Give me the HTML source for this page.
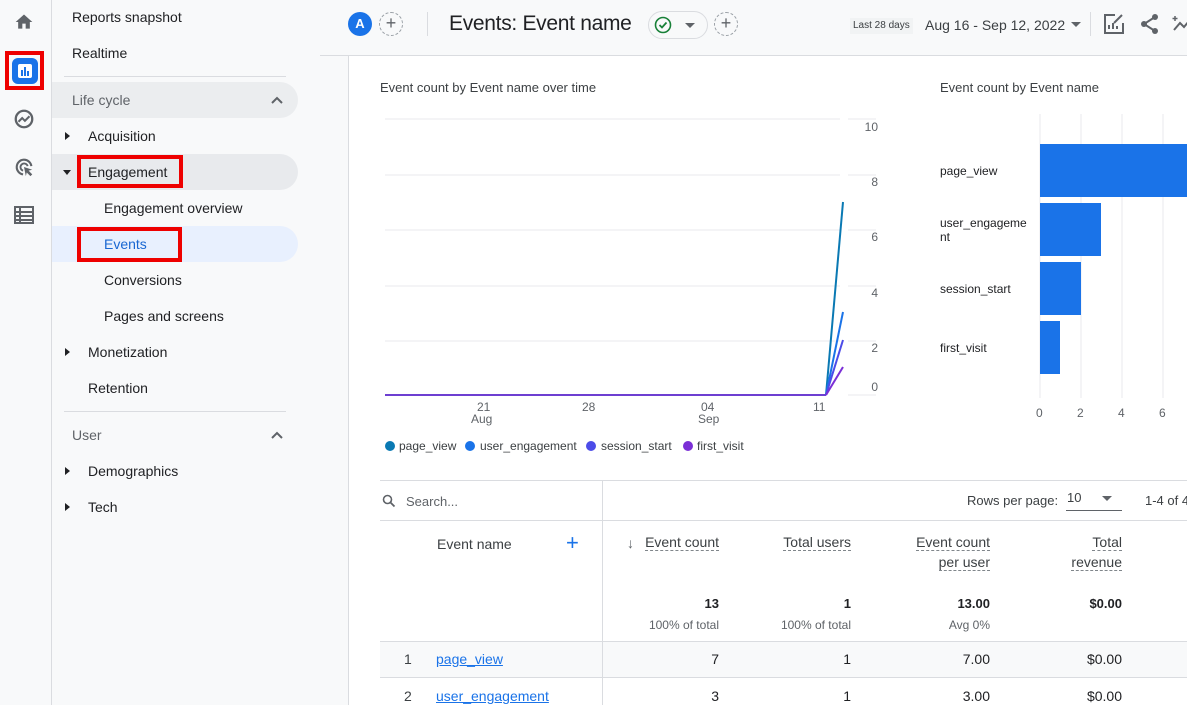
<!DOCTYPE html>
<html><head><style>
*{margin:0;padding:0;box-sizing:border-box}
body{width:1187px;height:705px;overflow:hidden;background:#f8f9fa;font-family:"Liberation Sans",sans-serif;color:#202124;position:relative}
.a{position:absolute;white-space:nowrap}
.nav{font-size:14px;color:#202124}
.red{position:absolute;border:4px solid #e00;}
.r{text-align:right}
.dash{border-bottom:1px dashed #80868b}
</style></head><body>
<div class="a" style="left:0;top:0;width:52px;height:705px;background:#f8f9fa;border-right:1px solid #dadce0"></div>
<svg class="a" style="left:14px;top:12px" width="20" height="20" viewBox="0 0 24 24"><path d="M10 20v-6h4v6h5v-8h3L12 3 2 12h3v8z" fill="#5f6368"/></svg>
<div class="a" style="left:12px;top:58px;width:26px;height:26px;background:#1a73e8;border-radius:6px"></div>
<div class="a" style="left:18px;top:64px;width:14px;height:14px;background:#fff;border-radius:2px"></div>
<div class="a" style="left:21px;top:70px;width:2px;height:6px;background:#1a73e8"></div>
<div class="a" style="left:24px;top:67px;width:2px;height:9px;background:#1a73e8"></div>
<div class="a" style="left:27px;top:71px;width:2px;height:5px;background:#1a73e8"></div>
<div class="red" style="left:5px;top:51px;width:39px;height:39px"></div>
<svg class="a" style="left:13px;top:108px" width="22" height="22" viewBox="0 0 24 24"><circle cx="12" cy="12" r="9" fill="none" stroke="#5f6368" stroke-width="2.5"/><path d="M6 15l4-4 3 3 5-5" fill="none" stroke="#5f6368" stroke-width="2.2"/></svg>
<svg class="a" style="left:13px;top:156px" width="22" height="22" viewBox="0 0 24 24"><path d="M11 20a8 8 0 1 1 9-9" fill="none" stroke="#5f6368" stroke-width="2.3"/><path d="M11 16a4 4 0 1 1 5-5" fill="none" stroke="#5f6368" stroke-width="2"/><path d="M12 12l9 3-4 1 4 4-2 2-4-4-1 4z" fill="#5f6368"/></svg>
<svg class="a" style="left:14px;top:206px" width="20" height="18" viewBox="0 0 20 18"><rect x="1" y="1" width="18" height="16" fill="none" stroke="#5f6368" stroke-width="2"/><path d="M1 6h18M1 10h18M1 14h18M6 1v16" stroke="#5f6368" stroke-width="2"/></svg>

<div class="a nav" style="left:72px;top:9px">Reports snapshot</div>
<div class="a nav" style="left:72px;top:45px">Realtime</div>
<div class="a" style="left:64px;top:76px;width:222px;height:1px;background:#dadce0"></div>
<div class="a" style="left:52px;top:82px;width:246px;height:36px;background:#ebedef;border-radius:0 18px 18px 0"></div>
<div class="a nav" style="left:72px;top:92px;color:#5f6368">Life cycle</div>
<svg class="a" style="left:270px;top:95px" width="14" height="10" viewBox="0 0 14 10"><path d="M2 8l5-5 5 5" fill="none" stroke="#5f6368" stroke-width="2"/></svg>
<div class="a" style="left:65px;top:132px;border-left:5px solid #202124;border-top:4px solid transparent;border-bottom:4px solid transparent"></div>
<div class="a nav" style="left:88px;top:128px">Acquisition</div>
<div class="a" style="left:52px;top:154px;width:246px;height:36px;background:#e8eaed;border-radius:0 18px 18px 0"></div>
<div class="a" style="left:63px;top:170px;border-top:5px solid #202124;border-left:4px solid transparent;border-right:4px solid transparent"></div>
<div class="a nav" style="left:88px;top:164px">Engagement</div>
<div class="red" style="left:77px;top:155px;width:106px;height:33px"></div>
<div class="a nav" style="left:104px;top:200px">Engagement overview</div>
<div class="a" style="left:52px;top:226px;width:246px;height:36px;background:#e8f0fe;border-radius:0 18px 18px 0"></div>
<div class="a nav" style="left:104px;top:236px;color:#1967d2">Events</div>
<div class="red" style="left:77px;top:227px;width:105px;height:35px"></div>
<div class="a nav" style="left:104px;top:272px">Conversions</div>
<div class="a nav" style="left:104px;top:308px">Pages and screens</div>
<div class="a" style="left:65px;top:348px;border-left:5px solid #202124;border-top:4px solid transparent;border-bottom:4px solid transparent"></div>
<div class="a nav" style="left:88px;top:344px">Monetization</div>
<div class="a nav" style="left:88px;top:380px">Retention</div>
<div class="a" style="left:64px;top:411px;width:222px;height:1px;background:#dadce0"></div>
<div class="a nav" style="left:72px;top:427px;color:#5f6368">User</div>
<svg class="a" style="left:270px;top:430px" width="14" height="10" viewBox="0 0 14 10"><path d="M2 8l5-5 5 5" fill="none" stroke="#5f6368" stroke-width="2"/></svg>
<div class="a" style="left:65px;top:467px;border-left:5px solid #202124;border-top:4px solid transparent;border-bottom:4px solid transparent"></div>
<div class="a nav" style="left:88px;top:463px">Demographics</div>
<div class="a" style="left:65px;top:503px;border-left:5px solid #202124;border-top:4px solid transparent;border-bottom:4px solid transparent"></div>
<div class="a nav" style="left:88px;top:499px">Tech</div>
<div class="a" style="left:348px;top:56px;width:1px;height:649px;background:#dadce0"></div>

<div class="a" style="left:320px;top:55px;width:867px;height:1px;background:#dadce0"></div>
<div class="a" style="left:348px;top:12px;width:24px;height:24px;border-radius:50%;background:#1a73e8;color:#fff;font-size:13px;font-weight:bold;text-align:center;line-height:24px">A</div>
<div class="a" style="left:379px;top:12px;width:24px;height:24px;border-radius:50%;border:1px dashed #9aa0a6;color:#5f6368;text-align:center;line-height:21px;font-size:18px">+</div>
<div class="a" style="left:427px;top:12px;width:1px;height:24px;background:#dadce0"></div>
<div class="a" style="left:449px;top:12px;font-size:21px;letter-spacing:-0.3px;color:#202124">Events: Event name</div>
<div class="a" style="left:648px;top:11px;width:60px;height:28px;border:1px solid #dadce0;border-radius:14px"></div>
<svg class="a" style="left:654px;top:16px" width="18" height="18" viewBox="0 0 18 18"><circle cx="9" cy="9" r="7.5" fill="none" stroke="#188038" stroke-width="1.6"/><path d="M5.5 9l2.5 2.5 4.5-5" fill="none" stroke="#188038" stroke-width="1.8"/></svg>
<div class="a" style="left:685px;top:23px;border-top:5px solid #5f6368;border-left:5px solid transparent;border-right:5px solid transparent"></div>
<div class="a" style="left:714px;top:12px;width:24px;height:24px;border-radius:50%;border:1px dashed #9aa0a6;color:#5f6368;text-align:center;line-height:21px;font-size:18px">+</div>
<div class="a" style="left:850px;top:18px;height:16px;padding:0 3px;background:#f1f3f4;font-size:10px;line-height:16px;color:#3c4043">Last 28 days</div>
<div class="a" style="left:925px;top:17px;font-size:14px;color:#3c4043">Aug 16 - Sep 12, 2022</div>
<div class="a" style="left:1071px;top:22px;border-top:5px solid #5f6368;border-left:5px solid transparent;border-right:5px solid transparent"></div>
<div class="a" style="left:1090px;top:12px;width:1px;height:24px;background:#dadce0"></div>
<svg class="a" style="left:1103px;top:13px" width="22" height="22" viewBox="0 0 22 22"><path d="M12 2H2v18h18V10" fill="none" stroke="#5f6368" stroke-width="2"/><path d="M6 16v-4M10 16v-6M14 16v-3M11 10l8-8" stroke="#5f6368" stroke-width="2"/></svg>
<svg class="a" style="left:1140px;top:13px" width="20" height="22" viewBox="0 0 20 22"><circle cx="15" cy="4" r="3" fill="#5f6368"/><circle cx="4" cy="11" r="3" fill="#5f6368"/><circle cx="15" cy="18" r="3" fill="#5f6368"/><path d="M15 4L4 11l11 7" fill="none" stroke="#5f6368" stroke-width="2"/></svg>
<svg class="a" style="left:1172px;top:14px" width="15" height="20" viewBox="0 0 15 20"><path d="M2 16l6-7 4 4 5-6" fill="none" stroke="#5f6368" stroke-width="2"/><path d="M3 2v5M0.5 4.5h5" stroke="#5f6368" stroke-width="1.5"/></svg>

<div class="a" style="left:349px;top:56px;width:838px;height:649px;background:#fff"></div>
<div class="a" style="left:380px;top:80px;font-size:13px;color:#3c4043">Event count by Event name over time</div>
<div class="a" style="left:940px;top:80px;font-size:13px;color:#3c4043">Event count by Event name</div>

<svg class="a" style="left:349px;top:56px" width="838" height="420" viewBox="349 56 838 420" font-family="Liberation Sans, sans-serif" font-size="12" fill="#5f6368">
<g stroke="#e8eaed" stroke-width="1">
<line x1="385" y1="119" x2="840" y2="119"/><line x1="848" y1="119" x2="876" y2="119"/>
<line x1="385" y1="175" x2="840" y2="175"/><line x1="848" y1="175" x2="876" y2="175"/>
<line x1="385" y1="230" x2="840" y2="230"/><line x1="848" y1="230" x2="876" y2="230"/>
<line x1="385" y1="286" x2="840" y2="286"/><line x1="848" y1="286" x2="876" y2="286"/>
<line x1="385" y1="341" x2="840" y2="341"/><line x1="848" y1="341" x2="876" y2="341"/>
<line x1="848" y1="395" x2="876" y2="395"/>
<line x1="1081" y1="114" x2="1081" y2="398"/><line x1="1122" y1="114" x2="1122" y2="398"/><line x1="1163" y1="114" x2="1163" y2="398"/>
<line x1="1040" y1="114" x2="1040" y2="398"/>
</g>
<text x="878" y="131" text-anchor="end">10</text><text x="878" y="186" text-anchor="end">8</text><text x="878" y="241" text-anchor="end">6</text><text x="878" y="297" text-anchor="end">4</text><text x="878" y="352" text-anchor="end">2</text><text x="878" y="391" text-anchor="end">0</text>
<line x1="385" y1="395" x2="826" y2="395" stroke="#6d3fd1" stroke-width="2"/>
<path d="M826 395L843 202" stroke="#0a79b3" stroke-width="2" fill="none"/>
<path d="M826 395L843 312" stroke="#1a73e8" stroke-width="2" fill="none"/>
<path d="M826 395L843 340" stroke="#4c4ce8" stroke-width="2" fill="none"/>
<path d="M826 395L843 367" stroke="#7b2fd6" stroke-width="2" fill="none"/>
<text x="477" y="411">21</text><text x="471" y="423">Aug</text>
<text x="582" y="411">28</text>
<text x="701" y="411">04</text><text x="698" y="423">Sep</text>
<text x="813" y="411">11</text>
<circle cx="390" cy="446" r="5" fill="#0a79b3"/><text x="399" y="450" fill="#3c4043">page_view</text>
<circle cx="470" cy="446" r="5" fill="#1a73e8"/><text x="480" y="450" fill="#3c4043">user_engagement</text>
<circle cx="591" cy="446" r="5" fill="#4c4ce8"/><text x="601" y="450" fill="#3c4043">session_start</text>
<circle cx="688" cy="446" r="5" fill="#7b2fd6"/><text x="697" y="450" fill="#3c4043">first_visit</text>
<g fill="#1a73e8">
<rect x="1040" y="144" width="147" height="53"/>
<rect x="1040" y="203" width="61" height="53"/>
<rect x="1040" y="262" width="41" height="53"/>
<rect x="1040" y="321" width="20" height="53"/>
</g>
<g fill="#202124"><text x="940" y="175">page_view</text><text x="940" y="227">user_engageme</text><text x="940" y="241">nt</text><text x="940" y="293">session_start</text><text x="940" y="352">first_visit</text></g>
<text x="1036" y="417">0</text><text x="1077" y="417">2</text><text x="1118" y="417">4</text><text x="1159" y="417">6</text>
</svg>

<div class="a" style="left:380px;top:480px;width:807px;height:1px;background:#dadce0"></div>
<div class="a" style="left:602px;top:480px;width:1px;height:225px;background:#dadce0"></div>
<div class="a" style="left:380px;top:520px;width:807px;height:1px;background:#dadce0"></div>
<div class="a" style="left:380px;top:641px;width:807px;height:37px;background:#f8f9fa;border-top:1px solid #dadce0;border-bottom:1px solid #dadce0"></div>
<div class="a" style="left:602px;top:641px;width:1px;height:64px;background:#dadce0"></div>
<svg class="a" style="left:382px;top:494px" width="14" height="14" viewBox="0 0 14 14"><circle cx="5.5" cy="5.5" r="4" fill="none" stroke="#5f6368" stroke-width="1.6"/><path d="M8.5 8.5l4 4" stroke="#5f6368" stroke-width="1.8"/></svg>
<div class="a" style="left:406px;top:494px;font-size:13px;color:#5f6368">Search...</div>
<div class="a" style="left:967px;top:493px;font-size:13px;color:#3c4043">Rows per page:</div>
<div class="a" style="left:1067px;top:490px;font-size:13px;color:#3c4043">10</div>
<div class="a" style="left:1066px;top:510px;width:56px;height:1px;background:#5f6368"></div>
<div class="a" style="left:1102px;top:496px;border-top:5px solid #5f6368;border-left:5px solid transparent;border-right:5px solid transparent"></div>
<div class="a" style="left:1145px;top:493px;font-size:13px;color:#3c4043">1-4 of 4</div>

<div class="a" style="left:437px;top:536px;font-size:14px;color:#3c4043">Event name</div>
<div class="a" style="left:566px;top:530px;font-size:22px;color:#1a73e8">+</div>
<div class="a" style="left:627px;top:535px;font-size:14px;color:#5f6368">↓</div>
<div class="a r dash" style="right:468px;top:534px;font-size:14px;color:#3c4043">Event count</div>
<div class="a r dash" style="right:336px;top:534px;font-size:14px;color:#3c4043">Total users</div>
<div class="a r dash" style="right:197px;top:534px;font-size:14px;color:#3c4043">Event count</div>
<div class="a r dash" style="right:197px;top:554px;font-size:14px;color:#3c4043">per user</div>
<div class="a r dash" style="right:65px;top:534px;font-size:14px;color:#3c4043">Total</div>
<div class="a r dash" style="right:65px;top:554px;font-size:14px;color:#3c4043">revenue</div>

<div class="a r" style="right:468px;top:596px;font-size:13px;font-weight:bold">13</div>
<div class="a r" style="right:336px;top:596px;font-size:13px;font-weight:bold">1</div>
<div class="a r" style="right:197px;top:596px;font-size:13px;font-weight:bold">13.00</div>
<div class="a r" style="right:65px;top:596px;font-size:13px;font-weight:bold">$0.00</div>
<div class="a r" style="right:468px;top:618px;font-size:12px;color:#5f6368">100% of total</div>
<div class="a r" style="right:336px;top:618px;font-size:12px;color:#5f6368">100% of total</div>
<div class="a r" style="right:197px;top:618px;font-size:12px;color:#5f6368">Avg 0%</div>

<div class="a" style="left:404px;top:651px;font-size:14px;color:#3c4043">1</div>
<div class="a" style="left:436px;top:651px;font-size:14px;color:#1a73e8;text-decoration:underline">page_view</div>
<div class="a r" style="right:468px;top:651px;font-size:14px">7</div>
<div class="a r" style="right:336px;top:651px;font-size:14px">1</div>
<div class="a r" style="right:197px;top:651px;font-size:14px">7.00</div>
<div class="a r" style="right:65px;top:651px;font-size:14px">$0.00</div>
<div class="a" style="left:404px;top:688px;font-size:14px;color:#3c4043">2</div>
<div class="a" style="left:436px;top:688px;font-size:14px;color:#1a73e8;text-decoration:underline">user_engagement</div>
<div class="a r" style="right:468px;top:688px;font-size:14px">3</div>
<div class="a r" style="right:336px;top:688px;font-size:14px">1</div>
<div class="a r" style="right:197px;top:688px;font-size:14px">3.00</div>
<div class="a r" style="right:65px;top:688px;font-size:14px">$0.00</div>
</body></html>
